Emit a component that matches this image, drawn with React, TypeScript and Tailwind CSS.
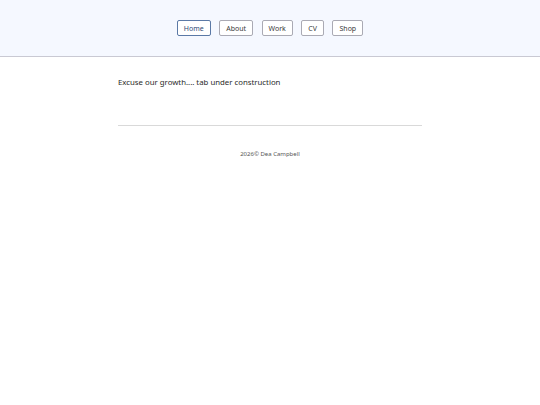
export default function App() {
  const tabs = ['Home', 'About', 'Work', 'CV', 'Shop'];
  return (
    <div className="min-h-[405px] bg-white font-['Noto_Sans',sans-serif] text-[#2a2a2a]">
      <header className="h-[57px] bg-[#f5f8ff] border-b border-[#c9c9d3] flex justify-center pt-[20px]">
        <nav className="flex gap-[8.5px] h-[16px]">
          {tabs.map((t, i) => (
            <button
              key={t}
              className={`h-[16px] px-[6px] rounded-[2px] border bg-white text-[7px] leading-none ${
                i === 0 ? 'border-[#5b79a6] text-[#2f4a78]' : 'border-[#aaaab4] text-[#3a3a3a]'
              }`}
            >
              {t}
            </button>
          ))}
        </nav>
      </header>
      <main className="w-[304px] mx-auto">
        <p className="mt-[19px] text-[7.8px] leading-[12px]">Excuse our growth.... tab under construction</p>
        <hr className="mt-[37px] border-t border-[#d9d9d9]" />
        <p className="mt-[24px] text-center text-[6px] text-[#555]">2026© Dea Campbell</p>
      </main>
    </div>
  );
}
